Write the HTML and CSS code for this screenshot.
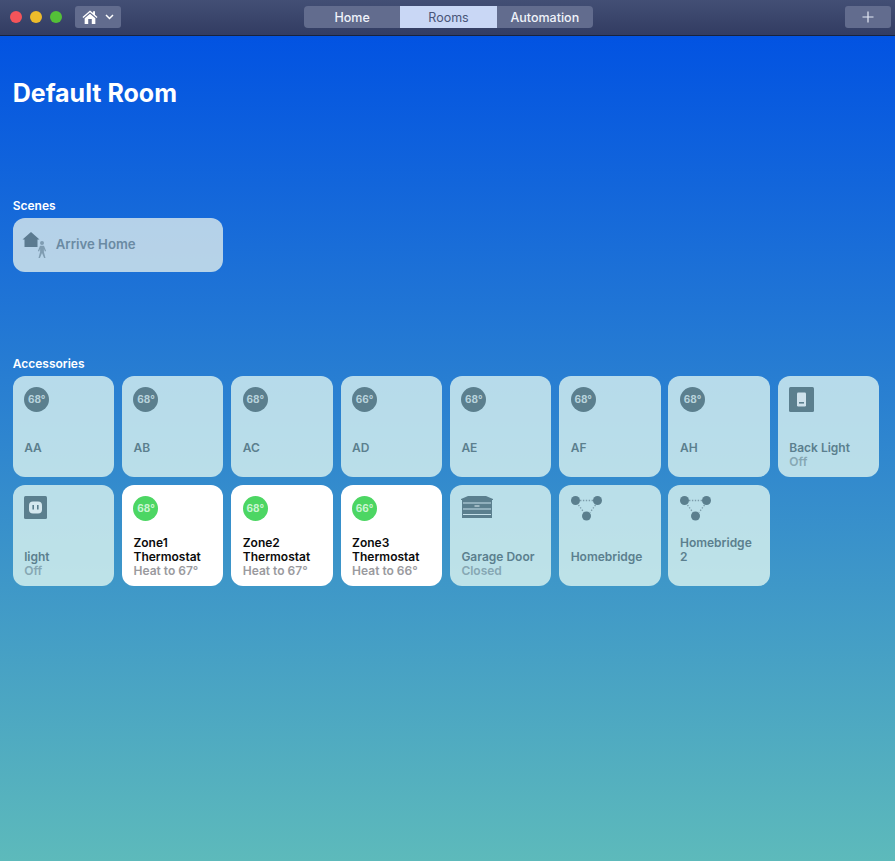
FILE: index.html
```html
<!DOCTYPE HTML>
<html>
<head>
    <title>Home</title>
    <meta name="viewport" content="width=device-width, initial-scale=1">
    <link rel="stylesheet" href="styles.css">
</head>

<body>

    <svg class="defs" width="0" height="0">
        <symbol id="bridge" viewBox="0 0 32 28">
            <path d="M9 4.5H23M7.5 9L13 16.5M24.5 9L19 16.5" stroke="#7d9dab" stroke-width="1.3" stroke-dasharray="1.4 1.5" fill="none"/>
            <circle cx="4.5" cy="4.5" r="4.5" fill="#5b7f8e"/>
            <circle cx="26.5" cy="4.5" r="4.5" fill="#5b7f8e"/>
            <circle cx="15.5" cy="20" r="4.5" fill="#5b7f8e"/>
        </symbol>
    </svg>

    <!--title bar-------------------------------------------------------->
    <header class="titlebar">
        <div class="lights">
            <span class="light red"></span>
            <span class="light yellow"></span>
            <span class="light green"></span>
        </div>
        <div class="home-btn">
            <svg width="16" height="15" viewBox="0 0 17 16">
                <path d="M8.5 0.5L0.5 7.4L1.4 8.4L8.5 2.4L15.6 8.4L16.5 7.4L13.8 5V1.2H11.8V3.3Z" fill="#fff"/>
                <path d="M2.8 8.8L8.5 3.9L14.2 8.8V15H10.4V9.6H6.6V15H2.8Z" fill="#fff"/>
            </svg>
            <svg width="9" height="6" viewBox="0 0 9 6">
                <path d="M1 1L4.5 4.5L8 1" stroke="#fff" stroke-width="1.5" fill="none"/>
            </svg>
        </div>
        <nav class="tabs">
            <span class="tab">Home</span>
            <span class="tab active">Rooms</span>
            <span class="tab">Automation</span>
        </nav>
        <div class="add-btn">
            <svg width="12" height="12" viewBox="0 0 12 12">
                <path d="M6 0.5V11.5M0.5 6H11.5" stroke="#e4e9f5" stroke-width="1.2" fill="none"/>
            </svg>
        </div>
    </header>

    <!--room-------------------------------------------------------->
    <main class="room">
        <h1>Default Room</h1>

        <h2 class="scenes-title">Scenes</h2>
        <div class="scene">
            <svg width="32" height="28" viewBox="0 0 32 28">
                <path d="M9 2L0.5 9.5H2.5V17H15.5V9.5H17.5L9 2Z" fill="#5b7a90"/>
                <g transform="translate(-1.5 0)">
                    <circle cx="21.5" cy="13" r="2" fill="#7f9cb1"/>
                    <path d="M19.5 15.8H23.5L25.6 21L24.4 21.5L23.4 18.8V22L25 28H23.6L21.5 23L19.4 28H18L19.6 22V18.8L18.6 21.5L17.4 21Z" fill="#7f9cb1"/>
                </g>
            </svg>
            <span>Arrive Home</span>
        </div>

        <h2 class="acc-title">Accessories</h2>
        <div class="tiles">
            <div class="tile"><div class="temp">68°</div><div class="name">AA</div><div class="status"></div></div>
            <div class="tile"><div class="temp">68°</div><div class="name">AB</div><div class="status"></div></div>
            <div class="tile"><div class="temp">68°</div><div class="name">AC</div><div class="status"></div></div>
            <div class="tile"><div class="temp">66°</div><div class="name">AD</div><div class="status"></div></div>
            <div class="tile"><div class="temp">68°</div><div class="name">AE</div><div class="status"></div></div>
            <div class="tile"><div class="temp">68°</div><div class="name">AF</div><div class="status"></div></div>
            <div class="tile"><div class="temp">68°</div><div class="name">AH</div><div class="status"></div></div>
            <div class="tile">
                <svg class="icon" width="25" height="25" viewBox="0 0 25 25">
                    <rect width="25" height="25" rx="1.5" fill="#5b7f8e"/>
                    <rect x="8" y="5.5" width="9" height="14" rx="1.2" fill="#cfe2ec"/>
                    <rect x="10" y="15" width="5" height="1.6" fill="#5b7f8e"/>
                </svg>
                <div class="name">Back Light</div>
                <div class="status">Off</div>
            </div>

            <div class="tile">
                <svg class="icon" width="23" height="23" viewBox="0 0 23 23">
                    <rect width="23" height="23" rx="1.5" fill="#5b7f8e"/>
                    <rect x="5" y="5.5" width="13" height="12" rx="4" fill="#d5e8ef"/>
                    <rect x="8.4" y="9" width="1.6" height="4.5" fill="#5b7f8e"/>
                    <rect x="13" y="9" width="1.6" height="4.5" fill="#5b7f8e"/>
                </svg>
                <div class="name">light</div>
                <div class="status">Off</div>
            </div>
            <div class="tile on"><div class="temp">68°</div><div class="name">Zone1 Thermostat</div><div class="status">Heat to 67°</div></div>
            <div class="tile on"><div class="temp">68°</div><div class="name">Zone2 Thermostat</div><div class="status">Heat to 67°</div></div>
            <div class="tile on"><div class="temp">66°</div><div class="name">Zone3 Thermostat</div><div class="status">Heat to 66°</div></div>
            <div class="tile">
                <svg class="icon" width="32" height="22" viewBox="0 0 32 22">
                    <path d="M0 3L7 0H25L32 3V4H0Z" fill="#5b7f8e"/>
                    <rect x="1" y="4" width="30" height="18" fill="#5b7f8e"/>
                    <rect x="2" y="6.5" width="28" height="1" fill="#c5e0e9"/>
                    <rect x="2" y="12.5" width="28" height="1" fill="#c5e0e9"/>
                    <rect x="2" y="18" width="28" height="1" fill="#c5e0e9"/>
                    <rect x="13.5" y="9.5" width="5" height="1" fill="#e4f1f5"/>
                </svg>
                <div class="name">Garage Door</div>
                <div class="status">Closed</div>
            </div>
            <div class="tile">
                <svg class="icon" width="32" height="28"><use href="#bridge"/></svg>
                <div class="name">Homebridge</div>
                <div class="status"></div>
            </div>
            <div class="tile">
                <svg class="icon" width="32" height="28"><use href="#bridge"/></svg>
                <div class="name">Homebridge 2</div>
                <div class="status"></div>
            </div>
        </div>
    </main>

</body>

</html>
```

FILE: styles.css
```css
html, body {
    margin: 0;
    height: 100%;
}

body {
    font-family: Inter, "Liberation Sans", sans-serif;
    display: flex;
    flex-direction: column;
    overflow: hidden;
}

.defs {
    position: absolute;
}

/* title bar */

.titlebar {
    height: 36px;
    flex: none;
    display: flex;
    align-items: flex-start;
    padding: 6px 4px 0 10px;
    box-sizing: border-box;
    background: linear-gradient(#434f75, #323c62);
    border-bottom: 1px solid #17233f;
}

.lights {
    display: flex;
    gap: 8px;
    padding-top: 5px;
}

.light {
    width: 12px;
    height: 12px;
    border-radius: 50%;
}

.red { background: #f4545a; }
.yellow { background: #ecbc2c; }
.green { background: #54c038; }

.home-btn {
    margin-left: 13px;
    width: 46px;
    height: 22px;
    border-radius: 3px;
    background: #626c8e;
    display: flex;
    align-items: center;
    justify-content: center;
    gap: 7px;
}

.tabs {
    display: flex;
    height: 22px;
    margin-left: 183px;
    border-radius: 4px;
    overflow: hidden;
    background: #626c8e;
    width: 289px;
}

.tab {
    flex: 1;
    text-align: center;
    line-height: 23px;
    font-size: 12.5px;
    font-weight: 500;
    color: #f0f3fa;
}

.tab.active {
    background: #c9d7f5;
    color: #4a5578;
    font-weight: 400;
}

.add-btn {
    margin-left: auto;
    width: 46px;
    height: 22px;
    border-radius: 3px;
    background: #626c8e;
    display: flex;
    align-items: center;
    justify-content: center;
}

/* room */

.room {
    flex: 1;
    padding: 0 12.7px;
    background: linear-gradient(#0253e2, #5dbabb);
}

h1 {
    margin: 41px 0 0;
    font-size: 25px;
    line-height: 32px;
    font-weight: 700;
    color: #fff;
}

h2 {
    margin: 0;
    font-size: 12px;
    line-height: 14px;
    font-weight: 600;
    color: #fff;
}

.scenes-title {
    margin-top: 90px;
}

.scene {
    margin-top: 5px;
    width: 210.5px;
    height: 53.5px;
    box-sizing: border-box;
    padding: 0 0 2px 9px;
    border-radius: 12px;
    background: rgba(243, 249, 239, .72);
    display: flex;
    align-items: center;
    gap: 2px;
    font-size: 13.2px;
    font-weight: 600;
    color: #6a8aa3;
}

.acc-title {
    margin-top: 85.5px;
}

.tiles {
    margin-top: 5px;
    display: grid;
    grid-template-columns: repeat(8, 101.5px);
    grid-auto-rows: 101px;
    column-gap: 7.8px;
    row-gap: 8px;
}

.tile {
    box-sizing: border-box;
    padding: 11px 12px 8px 11.5px;
    border-radius: 12px;
    background: rgba(239, 255, 244, .72);
    display: grid;
    grid-template-rows: auto 1fr 14px;
    font-size: 12px;
    line-height: 14px;
    font-weight: 600;
    color: #5b7f8e;
}

.temp {
    width: 25px;
    height: 25px;
    border-radius: 50%;
    background: #5b7f8e;
    color: #b8d3dc;
    font-size: 10px;
    line-height: 25px;
    font-weight: 700;
    text-align: center;
}

.icon {
    display: block;
}

.name {
    align-self: end;
}

.status {
    color: #86a7b3;
}

.tile.on {
    background: #fff;
    color: #0c0c0c;
}

.tile.on .temp {
    background: #4cd663;
    color: #c9f5d2;
}

.tile.on .status {
    color: #9a9a9e;
}
```
